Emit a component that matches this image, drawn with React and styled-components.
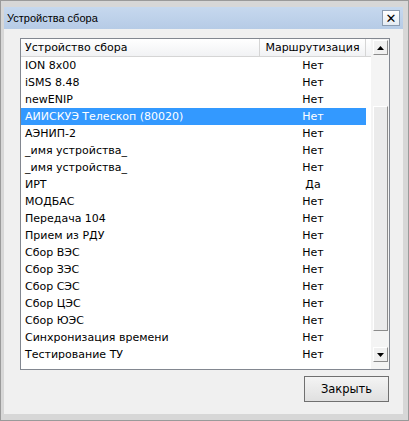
import styled, { createGlobalStyle } from 'styled-components';

const GlobalStyle = createGlobalStyle`
  body {
    margin: 0;
    background: #d6d6d6;
  }
`;

const devices = [
  { name: 'ION 8x00', route: 'Нет' },
  { name: 'iSMS 8.48', route: 'Нет' },
  { name: 'newENIP', route: 'Нет' },
  { name: 'АИИСКУЭ Телескоп (80020)', route: 'Нет', selected: true },
  { name: 'АЭНИП-2', route: 'Нет' },
  { name: '_имя устройства_', route: 'Нет' },
  { name: '_имя устройства_', route: 'Нет' },
  { name: 'ИРТ', route: 'Да' },
  { name: 'МОДБАС', route: 'Нет' },
  { name: 'Передача 104', route: 'Нет' },
  { name: 'Прием из РДУ', route: 'Нет' },
  { name: 'Сбор ВЭС', route: 'Нет' },
  { name: 'Сбор ЗЭС', route: 'Нет' },
  { name: 'Сбор СЭС', route: 'Нет' },
  { name: 'Сбор ЦЭС', route: 'Нет' },
  { name: 'Сбор ЮЭС', route: 'Нет' },
  { name: 'Синхронизация времени', route: 'Нет' },
  { name: 'Тестирование ТУ', route: 'Нет' },
];

const Frame = styled.div`
  box-sizing: border-box;
  width: 409px;
  height: 421px;
  background: #d7d7d7;
  border: 1px solid #9a9a9a;
  padding: 6px 5px 6px 3px;
  display: flex;
  flex-direction: column;
  font-family: 'DejaVu Sans', Verdana, sans-serif;
`;

const TitleBar = styled.div`
  height: 22px;
  flex-shrink: 0;
  background: linear-gradient(to bottom, #c6d8ee, #b6cbe6);
  display: flex;
  align-items: center;
  justify-content: space-between;
  padding: 0 3px 0 3px;
`;

const Title = styled.span`
  font-family: 'Liberation Sans', Arial, sans-serif;
  font-size: 11px;
  color: #000;
`;

const CloseBox = styled.div`
  width: 18px;
  height: 16px;
  box-sizing: border-box;
  border: 1px solid #8a9bb0;
  background: linear-gradient(to bottom, #ffffff, #e4ebf3);
  display: flex;
  align-items: center;
  justify-content: center;
  font-family: 'DejaVu Sans', sans-serif;
  font-weight: bold;
  font-size: 13px;
  line-height: 1;
  color: #000;
`;

const Body = styled.div`
  flex: 1;
  background: #f0f0f0;
  padding: 9px 13px 12px 16px;
  display: flex;
  flex-direction: column;
`;

const ListBox = styled.div`
  height: 332px;
  box-sizing: border-box;
  border: 1px solid #828790;
  background: #fff;
  display: flex;
  overflow: hidden;
`;

const Content = styled.div`
  flex: 1;
  overflow: hidden;
`;

const Header = styled.div`
  display: grid;
  grid-template-columns: 239px 106px 1fr;
  height: 18px;
  box-sizing: border-box;
  background: linear-gradient(to bottom, #ffffff, #f1f2f4);
  border-bottom: 1px solid #d5d5d5;
  font-size: 11px;
  color: #000;
`;

const HeaderCell = styled.div`
  display: flex;
  align-items: center;
  justify-content: ${(p) => (p.center ? 'center' : 'flex-start')};
  padding-left: ${(p) => (p.center ? '0' : '4px')};
  border-right: ${(p) => (p.last ? 'none' : '1px solid #d5d5d5')};
`;

const Row = styled.div`
  display: grid;
  grid-template-columns: 239px 106px;
  width: 345px;
  height: 17px;
  font-size: 11px;
  background: ${(p) => (p.selected ? '#3399ff' : 'transparent')};
  color: ${(p) => (p.selected ? '#fff' : '#000')};
`;

const Cell = styled.div`
  display: flex;
  align-items: center;
  justify-content: ${(p) => (p.center ? 'center' : 'flex-start')};
  padding-left: ${(p) => (p.center ? '0' : '4px')};
  white-space: nowrap;
`;

const ScrollBar = styled.div`
  width: 17px;
  flex-shrink: 0;
  background: #f4f4f4;
  display: flex;
  flex-direction: column;
  align-items: flex-end;
  padding-right: 1px;
`;

const ArrowButton = styled.div`
  width: 15px;
  height: 15px;
  box-sizing: border-box;
  background: #f0f0f0;
  border-top: 1px solid #fff;
  border-left: 1px solid #fff;
  border-right: 1px solid #8c8c8c;
  border-bottom: 1px solid #8c8c8c;
  display: flex;
  align-items: center;
  justify-content: center;
  margin-top: ${(p) => p.top || 0}px;
`;

const Track = styled.div`
  flex: 1;
  width: 15px;
  padding-top: 51px;
  box-sizing: border-box;
`;

const Thumb = styled.div`
  height: 225px;
  box-sizing: border-box;
  background: #ebebeb;
  border-top: 1px solid #fff;
  border-left: 1px solid #fff;
  border-right: 1px solid #8c8c8c;
  border-bottom: 1px solid #8c8c8c;
`;

const BottomGap = styled.div`
  height: 7px;
`;

const Footer = styled.div`
  display: flex;
  justify-content: flex-end;
  margin-top: 6px;
  padding-right: 1px;
`;

const CloseButton = styled.button`
  width: 85px;
  height: 26px;
  box-sizing: border-box;
  border: 1px solid #707070;
  background: linear-gradient(to bottom, #f4f4f4, #e0e0e0);
  font-family: 'DejaVu Sans', Verdana, sans-serif;
  font-size: 11.5px;
  color: #000;
  padding: 0;
`;

const Arrow = ({ down }) => (
  <svg width="7" height="4" viewBox="0 0 7 4">
    <polygon points={down ? '0,0 7,0 3.5,4' : '3.5,0 7,4 0,4'} fill="#000" />
  </svg>
);

export default function App() {
  return (
    <>
      <GlobalStyle />
      <Frame>
        <TitleBar>
          <Title>Устройства сбора</Title>
          <CloseBox>✕</CloseBox>
        </TitleBar>
        <Body>
          <ListBox>
            <Content>
              <Header>
                <HeaderCell>Устройство сбора</HeaderCell>
                <HeaderCell center>Маршрутизация</HeaderCell>
                <HeaderCell last />
              </Header>
              {devices.map((d, i) => (
                <Row key={i} selected={d.selected}>
                  <Cell>{d.name}</Cell>
                  <Cell center>{d.route}</Cell>
                </Row>
              ))}
            </Content>
            <ScrollBar>
              <ArrowButton top={1}>
                <Arrow />
              </ArrowButton>
              <Track>
                <Thumb />
              </Track>
              <ArrowButton>
                <Arrow down />
              </ArrowButton>
              <BottomGap />
            </ScrollBar>
          </ListBox>
          <Footer>
            <CloseButton>Закрыть</CloseButton>
          </Footer>
        </Body>
      </Frame>
    </>
  );
}
